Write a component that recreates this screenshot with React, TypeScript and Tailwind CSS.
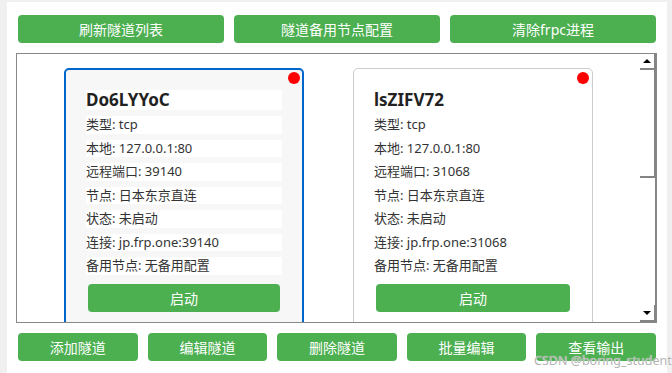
import React from "react";

const FONT = { fontFamily: '"Noto Sans","Noto Sans CJK SC",sans-serif' };

type Tunnel = {
  name: string;
  port: string;
  selected: boolean;
};

const tunnels: Tunnel[] = [
  { name: "Do6LYYoC", port: "39140", selected: true },
  { name: "lsZIFV72", port: "31068", selected: false },
];

function GreenButton({ label, className }: { label: string; className?: string }) {
  return (
    <div
      className={
        "flex h-[28px] items-center justify-center rounded-[4px] bg-[#4caf50] text-[14px] text-white " +
        (className ?? "")
      }
    >
      {label}
    </div>
  );
}

function Card({ t }: { t: Tunnel }) {
  const rows = [
    "类型: tcp",
    "本地: 127.0.0.1:80",
    `远程端口: ${t.port}`,
    "节点: 日本东京直连",
    "状态: 未启动",
    `连接: jp.frp.one:${t.port}`,
    "备用节点: 无备用配置",
  ];
  return (
    <div
      className={
        t.selected
          ? "relative h-[280px] w-[240px] shrink-0 rounded-[5px] border-2 border-[#0066cc] bg-[#f7f7f7] px-[20px] pt-[20px]"
          : "relative h-[280px] w-[240px] shrink-0 rounded-[5px] border border-[#cccccc] bg-white px-[20px] pt-[21px]"
      }
    >
      <div
        className={
          t.selected
            ? "absolute right-[2px] top-[2px] h-[12px] w-[12px] rounded-full bg-[#ff0000]"
            : "absolute right-[3px] top-[3px] h-[12px] w-[12px] rounded-full bg-[#ff0000]"
        }
      />
      <div className="flex h-[20px] items-center bg-white text-[17px] font-bold leading-[20px] text-[#222]">
        {t.name}
      </div>
      {rows.map((r) => (
        <div
          key={r}
          className="mt-[6px] flex h-[17.5px] items-center bg-white text-[13px] leading-[17.5px] text-[#333]"
        >
          {r}
        </div>
      ))}
      <div className="mx-[2px] mt-[9.5px] flex h-[28px] items-center justify-center rounded-[4px] bg-[#4caf50] text-[14px] text-white">
        启动
      </div>
    </div>
  );
}

function Scrollbar() {
  return (
    <div className="flex w-[16px] shrink-0 flex-col bg-white">
      <div className="flex h-[16px] items-center justify-center border-b-2 border-r-2 border-[#858585]">
        <div className="h-0 w-0 border-x-[4px] border-b-[4px] border-x-transparent border-b-black" />
      </div>
      <div className="h-[108px] border-b-2 border-r-2 border-[#858585] bg-white" />
      <div className="flex-1 border-r border-[#858585]" />
      <div className="flex h-[17px] items-center justify-center border-b-2 border-r-2 border-[#858585]">
        <div className="h-0 w-0 border-x-[4px] border-t-[4px] border-x-transparent border-t-black" />
      </div>
    </div>
  );
}

export default function App() {
  return (
    <div
      className="relative flex h-[373px] w-[672px] overflow-hidden bg-[#f0f0f0] pl-[7px] pr-[5px] pt-[2px]"
      style={FONT}
    >
      <div className="flex flex-1 flex-col bg-white">
        <div className="ml-[11px] mt-[13px] flex gap-[10px]">
          <GreenButton label="刷新隧道列表" className="w-[206px]" />
          <GreenButton label="隧道备用节点配置" className="w-[206px]" />
          <GreenButton label="清除frpc进程" className="w-[206px]" />
        </div>
        <div className="ml-[9px] mt-[10px] flex h-[270px] w-[641px] border border-[#888888] bg-white">
          <div className="flex flex-1 justify-center gap-[49px] overflow-hidden pt-[14px]">
            {tunnels.map((t) => (
              <Card key={t.name} t={t} />
            ))}
          </div>
          <Scrollbar />
        </div>
        <div className="ml-[11px] mt-[10px] flex w-[638px] gap-[10px]">
          <GreenButton label="添加隧道" className="flex-1" />
          <GreenButton label="编辑隧道" className="flex-1" />
          <GreenButton label="删除隧道" className="flex-1" />
          <GreenButton label="批量编辑" className="flex-1" />
          <GreenButton label="查看输出" className="flex-1" />
        </div>
      </div>
      <div
        className="absolute left-[534px] top-[353px] whitespace-nowrap text-[12.5px] leading-[16px] text-[#b4b4b4]"
        style={{ fontFamily: '"Noto Sans",sans-serif', textShadow: "0 0 1px #ffffff" }}
      >
        CSDN @boring_student
      </div>
    </div>
  );
}
